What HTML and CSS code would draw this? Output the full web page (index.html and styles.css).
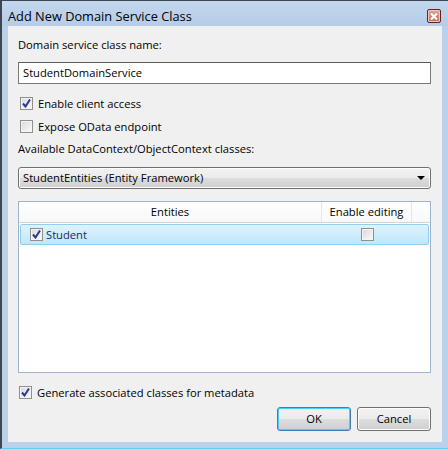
FILE: index.html
```html
<!DOCTYPE html>
<html>
<head>
<meta charset="utf-8">
<link rel="stylesheet" href="styles.css">
</head>
<body>
<div class="window">
  <div class="titlebar">
    <span class="title">Add New Domain Service Class</span>
    <span class="close"><svg width="8" height="7" viewBox="0 0 8 7"><path d="M1 0.5 L7 6.5 M7 0.5 L1 6.5" stroke="#fff" stroke-width="2"/></svg></span>
  </div>
  <div class="client">
    <div class="lbl">Domain service class name:</div>
    <div class="textbox">StudentDomainService</div>
    <div class="check-row first"><span class="cb checked"><svg width="9" height="9" viewBox="0 0 9 9"><path d="M1 4.5 L3.5 7.5 L8 0.5" fill="none" stroke="#2b3a8f" stroke-width="2"/></svg></span><span>Enable client access</span></div>
    <div class="check-row second"><span class="cb"></span><span>Expose OData endpoint</span></div>
    <div class="lbl lbl2">Available DataContext/ObjectContext classes:</div>
    <div class="combo"><span>StudentEntities (Entity Framework)</span><span class="arrow"></span></div>
    <div class="grid">
      <div class="grid-head">
        <div class="col-ent">Entities</div>
        <div class="col-edit">Enable editing</div>
        <div class="col-fill"></div>
      </div>
      <div class="grid-row">
        <div class="cell-ent"><span class="cb checked"><svg width="9" height="9" viewBox="0 0 9 9"><path d="M1 4.5 L3.5 7.5 L8 0.5" fill="none" stroke="#2b3a8f" stroke-width="2"/></svg></span><span>Student</span></div>
        <div class="cell-edit"><span class="cb"></span></div>
      </div>
    </div>
    <div class="check-row gen"><span class="cb checked"><svg width="9" height="9" viewBox="0 0 9 9"><path d="M1 4.5 L3.5 7.5 L8 0.5" fill="none" stroke="#2b3a8f" stroke-width="2"/></svg></span><span>Generate associated classes for metadata</span></div>
    <div class="buttons">
      <div class="btn default">OK</div>
      <div class="btn">Cancel</div>
    </div>
  </div>
</div>
</body>
</html>
```
FILE: styles.css
```css
* { box-sizing: border-box; }
html, body { margin: 0; padding: 0; }
body {
  width: 448px;
  height: 449px;
  overflow: hidden;
  font-family: "Open Sans", "Noto Sans", sans-serif;
  font-size: 11.2px;
  color: #000;
  background: #b9d1ea;
}
.window {
  width: 448px;
  height: 449px;
  border-top: 1px solid #3f4650;
  border-left: 2px solid #3f4650;
  border-bottom: 1px solid #5fd2f0;
  background: #b9d1ea;
  padding: 0 6px 6px 6px;
  display: flex;
  flex-direction: column;
}
.titlebar {
  height: 25px;
  flex: none;
  display: flex;
  align-items: center;
  justify-content: space-between;
  background: linear-gradient(#c3d7ee, #b5cce7);
  margin: 0 -6px;
  padding: 4px 6px 0 6px;
}
.title {
  font-size: 12.8px;
  color: #000;
}
.close {
  width: 14px;
  height: 14px;
  margin-right: 1px;
  margin-top: 1px;
  border: 1px solid #5e2424;
  border-radius: 2px;
  background: linear-gradient(#e0a79a, #c56b5c);
  box-shadow: inset 0 0 0 1px #f1c8c0;
  display: flex;
  align-items: center;
  justify-content: center;
}
.client {
  flex: 1;
  background: #f0f0f0;
  padding: 11px 11px 11px 10px;
  display: flex;
  flex-direction: column;
}
.lbl { height: 16px; line-height: 16px; }
.textbox {
  margin-top: 9px;
  height: 22px;
  border: 1px solid #7a7a7a;
  border-top-color: #5c5c5c;
  background: #fff;
  padding-left: 4px;
  line-height: 19px;
}
.check-row {
  height: 16px;
  display: flex;
  align-items: center;
  gap: 5px;
  padding-left: 2px;
}
.check-row.first { margin-top: 11px; }
.check-row.second { margin-top: 7px; }
.lbl2 { margin-top: 7px; }
.cb {
  width: 13px;
  height: 13px;
  flex: none;
  border: 1px solid #8e8f8f;
  background: linear-gradient(135deg, #d8d8d8, #fbfbfb);
  box-shadow: inset 0 0 0 1px #f4f4f4;
  display: flex;
  align-items: center;
  justify-content: center;
}
.combo {
  margin-top: 10px;
  height: 22px;
  border: 1px solid #707070;
  border-radius: 3px;
  background: linear-gradient(#f2f2f2 0%, #ebebeb 50%, #dddddd 51%, #cfcfcf 100%);
  box-shadow: inset 0 0 0 1px #fcfcfc;
  display: flex;
  align-items: center;
  justify-content: space-between;
  padding: 0 5px 1px 4px;
}
.arrow {
  width: 0;
  height: 0;
  border-left: 4px solid transparent;
  border-right: 4px solid transparent;
  border-top: 4px solid #000;
}
.grid {
  margin-top: 12px;
  flex: 1;
  border: 1px solid #9fb3ca;
  background: #fff;
  display: flex;
  flex-direction: column;
}
.grid-head {
  height: 21px;
  display: flex;
  border-bottom: 1px solid #d5d5d5;
  background: linear-gradient(#ffffff, #f7f8fa);
}
.grid-head > div {
  display: flex;
  align-items: center;
  justify-content: center;
  padding-bottom: 1px;
}
.col-ent { width: 303px; border-right: 1px solid #e4e6ea; }
.col-edit { width: 90px; border-right: 1px solid #e4e6ea; }
.col-fill { flex: 1; }
.grid-row {
  margin: 1px 1px 0 1px;
  height: 21px;
  display: flex;
  border: 1px solid #8fd0f2;
  border-radius: 2px;
  background: linear-gradient(#def3fd, #c1e6fa);
  color: #1a2a5a;
}
.cell-ent {
  width: 301px;
  display: flex;
  align-items: center;
  gap: 3px;
  padding-left: 9px;
}
.cell-edit {
  width: 90px;
  display: flex;
  align-items: center;
  justify-content: center;
}
.check-row.gen { margin-top: 11px; padding-left: 1px; }
.buttons {
  margin-top: 7px;
  display: flex;
  justify-content: flex-end;
  gap: 6px;
}
.btn {
  width: 74px;
  height: 24px;
  border: 1px solid #707070;
  border-radius: 3px;
  background: linear-gradient(#f2f2f2 0%, #ebebeb 50%, #dddddd 51%, #cfcfcf 100%);
  box-shadow: inset 0 0 0 1px #fcfcfc;
  display: flex;
  align-items: center;
  justify-content: center;
  padding-bottom: 1px;
}
.btn.default {
  border-color: #3c7fb1;
  box-shadow: inset 0 0 0 1px #48d0f9;
}
```
